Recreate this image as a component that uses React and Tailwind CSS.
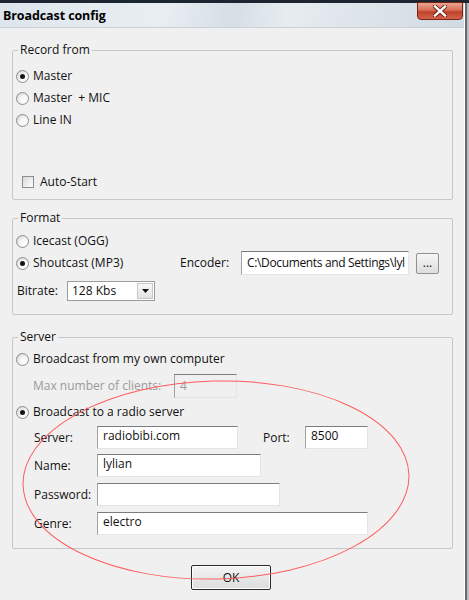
import React from "react";

const FONT = "font-['Open_Sans','Noto_Sans',sans-serif]";

function Radio({ checked, label, className = "" }) {
  return (
    <div className={`flex items-center gap-[4px] ${className}`}>
      <span className="w-[13px] h-[13px] rounded-full border border-[#8b8d8f] bg-[radial-gradient(circle_at_70%_70%,#ffffff_0%,#f4f4f4_45%,#c9cbcd_100%)] flex items-center justify-center shrink-0">
        {checked && <span className="w-[5px] h-[5px] rounded-full bg-[#141414]" />}
      </span>
      <span className="whitespace-pre">{label}</span>
    </div>
  );
}

function TextBox({ value = "", className = "", disabled = false }) {
  return (
    <div
      className={`border border-t-[#7a7c7e] border-l-[#a0a2a4] border-r-[#e3e6e9] border-b-[#e3e6e9] px-[5px] leading-[17px] whitespace-nowrap overflow-hidden ${
        disabled ? "bg-[#f0f0f0] text-[#9a9a9a]" : "bg-white text-[#111]"
      } ${className}`}
    >
      {value}
    </div>
  );
}

function Group({ title, className = "", children }) {
  return (
    <fieldset className={`border border-[#c3c8cc] rounded-[2px] ml-[12px] w-[441px] px-[3px] ${className}`}>
      <legend className="ml-[2px] px-[2px] leading-[16px] text-[#111]">{title}</legend>
      {children}
    </fieldset>
  );
}

export default function App() {
  return (
    <div className={`relative w-[469px] h-[600px] overflow-hidden bg-[#f0f0f0] text-[12px] text-[#111] ${FONT}`}>
      {/* desktop strip above the window */}
      <div className="h-[3px] bg-[#1c2530]" />

      <div className="flex">
        <div className="w-[464px]">
          {/* title bar */}
          <div className="h-[25px] flex items-center pl-[3px] pt-[3px] border-b border-[#c8d0d8] bg-[linear-gradient(100deg,#dde5ec_0%,#e9eef2_35%,#d6dee6_50%,#e6ecf0_62%,#d2dae2_100%)]">
            <span className="font-bold text-[12.5px] text-black tracking-[-0.1px]">Broadcast config</span>
          </div>

          {/* client area */}
          <div className="pt-[14px]">
            <Group title="Record from" className="h-[158px]">
              <Radio checked label="Master" className="h-[22px] mt-[7px]" />
              <Radio label="Master  + MIC" className="h-[22px]" />
              <Radio label="Line IN" className="h-[22px]" />
              <div className="h-[22px] mt-[40px] ml-[6px] flex items-center gap-[6px]">
                <span className="w-[12px] h-[12px] border border-[#8b8d8f] bg-[linear-gradient(135deg,#d8d8d8,#ffffff)]" />
                <span>Auto-Start</span>
              </div>
            </Group>

            <Group title="Format" className="h-[105px] mt-[10px]">
              <Radio label="Icecast (OGG)" className="h-[20px] mt-[5px]" />
              <div className="h-[24px] flex items-center">
                <Radio checked label="Shoutcast (MP3)" className="w-[164px]" />
                <span className="w-[61px]">Encoder:</span>
                <TextBox value="C:\Documents and Settings\lyl" className="w-[168px] h-[24px] pt-[2px] px-[4px] tracking-[-0.35px]" />
                <button className="ml-[7px] w-[23px] h-[21px] border border-[#8e9196] rounded-[2px] bg-[linear-gradient(#f6f6f6,#dedede)] leading-[14px] text-[12px]">
                  ...
                </button>
              </div>
              <div className="h-[24px] mt-[4px] flex items-center">
                <span className="w-[51px] pl-[1px]">Bitrate:</span>
                <div className="w-[88px] h-[20px] border border-[#9a9c9e] bg-white flex items-center">
                  <span className="flex-1 pl-[4px]">128 Kbs</span>
                  <span className="w-[16px] h-[16px] mr-[1px] border border-[#c5c7c9] bg-[linear-gradient(#f8f8f8,#e2e2e2)] flex items-center justify-center">
                    <svg width="7" height="4" viewBox="0 0 7 4">
                      <path d="M0 0h7L3.5 4z" fill="#111" />
                    </svg>
                  </span>
                </div>
              </div>
            </Group>

            <Group title="Server" className="h-[220px] mt-[14px]">
              <Radio label="Broadcast from my own computer" className="h-[22px] mt-[3px]" />
              <div className="h-[24px] mt-[4px] flex items-center pl-[17px]">
                <span className="w-[141px] text-[#9a9a9a]">Max number of clients:</span>
                <TextBox disabled value="4" className="w-[63px] h-[24px] pt-[2px]" />
              </div>
              <Radio checked label="Broadcast to a radio server" className="h-[22px] mt-[3px]" />
              <div className="h-[23px] mt-[3px] flex items-center pl-[18px]">
                <span className="w-[63px]">Server:</span>
                <TextBox value="radiobibi.com" className="w-[141px] h-[23px]" />
                <span className="ml-[25px] w-[42px]">Port:</span>
                <TextBox value="8500" className="w-[63px] h-[23px]" />
              </div>
              <div className="h-[23px] mt-[5px] flex items-center pl-[18px]">
                <span className="w-[63px]">Name:</span>
                <TextBox value="lylian" className="w-[164px] h-[23px]" />
              </div>
              <div className="h-[23px] mt-[6px] flex items-center pl-[18px]">
                <span className="w-[63px]">Password:</span>
                <TextBox className="w-[183px] h-[23px]" />
              </div>
              <div className="h-[23px] mt-[6px] flex items-center pl-[18px]">
                <span className="w-[63px]">Genre:</span>
                <TextBox value="electro" className="w-[271px] h-[23px]" />
              </div>
            </Group>

            <button className="mt-[16px] ml-[191px] w-[80px] h-[25px] border border-[#2a2a2a] rounded-[2px] bg-[linear-gradient(#f4f4f4,#dcdcdc)] shadow-[inset_0_0_0_1px_#ffffff] text-[12px]">
              OK
            </button>
          </div>
        </div>

        {/* right window frame */}
        <div className="flex h-[600px]">
          <div className="w-[1px] bg-white" />
          <div className="w-[2px] bg-[#666a6e]" />
          <div className="w-[2px] bg-[#b9bdc1]" />
        </div>
      </div>

      {/* close button */}
      <div className="absolute top-[2px] right-[6px] w-[46px] h-[18px] rounded-b-[4px] border border-[#7a2418] bg-[linear-gradient(#eaa48f_0%,#d66f58_45%,#c0432c_55%,#d4614a_100%)] flex items-center justify-center">
        <svg width="14" height="12" viewBox="0 0 14 12">
          <path d="M2 1.5L12 10.5M12 1.5L2 10.5" stroke="#5a1a10" strokeWidth="4.2" strokeLinecap="square" />
          <path d="M2 1.5L12 10.5M12 1.5L2 10.5" stroke="#ffffff" strokeWidth="2.4" strokeLinecap="square" />
        </svg>
      </div>

      {/* hand-drawn red ellipse annotation */}
      <svg className="absolute inset-0 pointer-events-none" width="469" height="600">
        <ellipse cx="216" cy="480" rx="193" ry="99" fill="none" stroke="#ff5c5c" strokeWidth="1" transform="rotate(-1.5 216 480)" />
      </svg>
    </div>
  );
}
